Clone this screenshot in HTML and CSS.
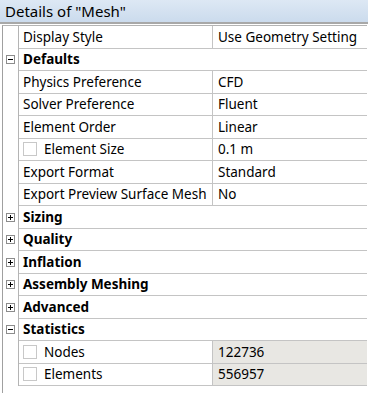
FILE: index.html
```html
<!DOCTYPE html>
<html lang="en">
<head>
<meta charset="UTF-8" />
<title>Details of "Mesh"</title>
<link rel="stylesheet" href="styles.css">
</head>
<body>

<div class="panel">
  <div class="title">Details of "Mesh"</div>
  <div class="grid">
    <div class="row">
      <div class="gutter"></div>
      <div class="name">Display Style</div>
      <div class="value">Use Geometry Setting</div>
    </div>
    <div class="row group">
      <div class="gutter"><span class="toggle"></span></div>
      <div class="name">Defaults</div>
    </div>
    <div class="row">
      <div class="gutter"></div>
      <div class="name">Physics Preference</div>
      <div class="value">CFD</div>
    </div>
    <div class="row">
      <div class="gutter"></div>
      <div class="name">Solver Preference</div>
      <div class="value">Fluent</div>
    </div>
    <div class="row">
      <div class="gutter"></div>
      <div class="name">Element Order</div>
      <div class="value">Linear</div>
    </div>
    <div class="row">
      <div class="gutter"></div>
      <div class="name"><span class="check"></span>Element Size</div>
      <div class="value">0.1 m</div>
    </div>
    <div class="row">
      <div class="gutter"></div>
      <div class="name">Export Format</div>
      <div class="value">Standard</div>
    </div>
    <div class="row">
      <div class="gutter"></div>
      <div class="name">Export Preview Surface Mesh</div>
      <div class="value">No</div>
    </div>
    <div class="row group">
      <div class="gutter"><span class="toggle closed"></span></div>
      <div class="name">Sizing</div>
    </div>
    <div class="row group">
      <div class="gutter"><span class="toggle closed"></span></div>
      <div class="name">Quality</div>
    </div>
    <div class="row group">
      <div class="gutter"><span class="toggle closed"></span></div>
      <div class="name">Inflation</div>
    </div>
    <div class="row group">
      <div class="gutter"><span class="toggle closed"></span></div>
      <div class="name">Assembly Meshing</div>
    </div>
    <div class="row group">
      <div class="gutter"><span class="toggle closed"></span></div>
      <div class="name">Advanced</div>
    </div>
    <div class="row group">
      <div class="gutter"><span class="toggle"></span></div>
      <div class="name">Statistics</div>
    </div>
    <div class="row">
      <div class="gutter"></div>
      <div class="name"><span class="check"></span>Nodes</div>
      <div class="value readonly">122736</div>
    </div>
    <div class="row">
      <div class="gutter"></div>
      <div class="name"><span class="check"></span>Elements</div>
      <div class="value readonly">556957</div>
    </div>
  </div>
</div>

</body>
</html>
```

FILE: styles.css
```css
body {
  margin: 0;
  background: #fff;
  font-family: 'Noto Sans', sans-serif;
  font-size: 13.5px;
  color: #000;
}
.panel {
  width: 368px;
  height: 393px;
  overflow: hidden;
}
.title {
  height: 24px;
  line-height: 23px;
  padding-left: 5px;
  font-size: 15px;
  background: linear-gradient(to bottom, #dde8f4, #cbdbed);
  border-bottom: 2px solid #a8a8a8;
  box-sizing: border-box;
}
.grid {
  margin-left: 2px;
  width: 364px;
  border-left: 1px solid #a0a0a0;
  border-top: 1px solid #b4b4b4;
  margin-top: 1px;
  padding-bottom: 8px;
}
.row {
  display: flex;
  height: 22.5px;
}
.gutter {
  width: 15px;
  flex: none;
  border-right: 1px solid #b4b4b4;
  display: flex;
  align-items: center;
  justify-content: center;
}
.name, .value {
  border-bottom: 1px solid #c4c4c4;
  display: flex;
  align-items: center;
  padding-left: 4px;
  white-space: nowrap;
  overflow: hidden;
  box-sizing: border-box;
}
.name {
  width: 194px;
  flex: none;
  border-right: 1px solid #c4c4c4;
}
.value {
  flex: 1;
  padding-left: 5px;
}
.value.readonly {
  background: #e8e7e3;
}
.group .name {
  flex: 1;
  border-right: none;
  font-weight: bold;
}

/* expand / collapse box */
.toggle {
  position: relative;
  width: 9px;
  height: 9px;
  border: 1px solid #8c8c8c;
  box-sizing: border-box;
  background: #fff;
}
.toggle::before {
  content: "";
  position: absolute;
  left: 1px;
  top: 3px;
  width: 5px;
  height: 1px;
  background: #000;
}
.toggle.closed::after {
  content: "";
  position: absolute;
  left: 3px;
  top: 1px;
  width: 1px;
  height: 5px;
  background: #000;
}
.check {
  width: 12px;
  height: 12px;
  border: 1px solid #c8c8c8;
  margin-right: 7px;
  background: #fff;
}
```
